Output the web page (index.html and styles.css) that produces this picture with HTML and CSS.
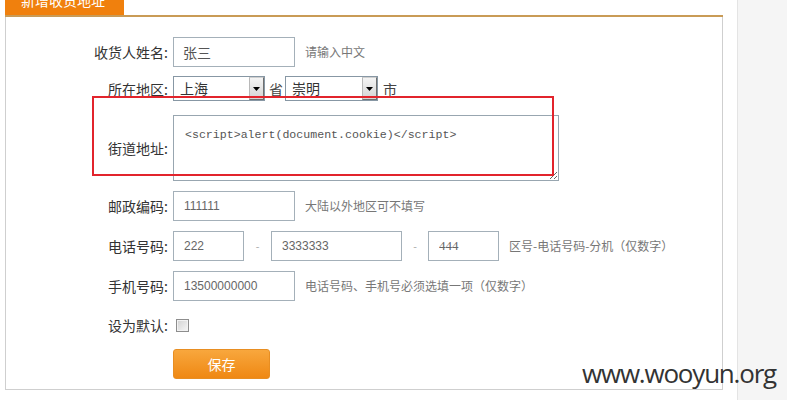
FILE: index.html
```html
<!DOCTYPE html>
<html lang="zh-CN">
<head>
<meta charset="utf-8">
<title>新增收货地址</title>
<link rel="stylesheet" href="styles.css">
</head>
<body>
<div class="page">
  <div class="main">
    <div class="panel">
      <div class="panel-head">
        <div class="tab"><span class="tab-title">新增收货地址</span></div>
      </div>
      <div class="panel-body">
        <div class="row row-name">
          <label class="lbl">收货人姓名:</label>
          <input class="field field-cjk w-mid" type="text" value="张三">
          <span class="hint">请输入中文</span>
        </div>
        <div class="row row-region">
          <label class="lbl">所在地区:</label>
          <div class="select w-sel1"><span class="sel-text">上海</span><span class="sel-btn"><svg width="7" height="4" viewBox="0 0 7 4"><path d="M0 0H7L3.5 4Z" fill="#000"/></svg></span></div>
          <span class="unit unit-prov">省</span>
          <div class="select w-sel2"><span class="sel-text">崇明</span><span class="sel-btn"><svg width="7" height="4" viewBox="0 0 7 4"><path d="M0 0H7L3.5 4Z" fill="#000"/></svg></span></div>
          <span class="unit unit-city">市</span>
        </div>
        <div class="row row-street">
          <label class="lbl">街道地址:</label>
          <textarea class="area">&lt;script&gt;alert(document.cookie)&lt;/script&gt;</textarea>
        </div>
        <div class="row">
          <label class="lbl">邮政编码:</label>
          <input class="field w-mid" type="text" value="111111">
          <span class="hint">大陆以外地区可不填写</span>
        </div>
        <div class="row">
          <label class="lbl">电话号码:</label>
          <input class="field w-short" type="text" value="222">
          <span class="dash dash-1">-</span>
          <input class="field w-long" type="text" value="3333333">
          <span class="dash dash-2">-</span>
          <input class="field field-serif w-short" type="text" value="444">
          <span class="hint">区号-电话号码-分机（仅数字）</span>
        </div>
        <div class="row">
          <label class="lbl">手机号码:</label>
          <input class="field w-mid" type="text" value="13500000000">
          <span class="hint">电话号码、手机号必须选填一项（仅数字）</span>
        </div>
        <div class="row row-check">
          <label class="lbl">设为默认:</label>
          <input class="check" type="checkbox">
        </div>
        <div class="row row-btn">
          <span class="lbl"></span>
          <button class="btn-save" type="button">保存</button>
        </div>
      </div>
    </div>
  </div>
  <aside class="sidebar"></aside>
</div>
<div class="annot"></div>
<div class="watermark">www.wooyun.org</div>
</body>
</html>
```

FILE: styles.css
```css
html, body {
  margin: 0;
  padding: 0;
  background: #fff;
}
body {
  font-family: "Noto Sans CJK SC", "Noto Sans", sans-serif;
  color: #333;
  width: 787px;
  height: 400px;
  overflow: hidden;
  position: relative;
}
.page {
  display: flex;
  height: 400px;
}
.main {
  width: 737px;
  flex: none;
  padding-left: 5px;
  box-sizing: border-box;
}
.sidebar {
  flex: 1;
  background: #f5f5f5;
  border-left: 1px solid #e4e4e4;
}
.panel {
  width: 718px;
}
.panel-head {
  height: 15px;
  border-bottom: 2px solid #c99b56;
  display: flex;
}
.tab {
  width: 119px;
  height: 15px;
  background: #f0800d;
  overflow: hidden;
}
.tab-title {
  display: block;
  margin-top: -8px;
  padding-left: 16px;
  font-size: 14px;
  line-height: 16px;
  color: #fff;
  white-space: nowrap;
}
.panel-body {
  border: 1px solid #cfcfcf;
  border-top: none;
  padding: 20px 0 10px 0;
  display: flex;
  flex-direction: column;
  gap: 10px;
}
.row {
  display: flex;
  align-items: center;
}
.row-region {
  margin-top: -1px;
  height: 25px;
}
.row-street {
  margin-top: 4px;
}
.row-check {
  height: 28px;
}
.lbl {
  width: 162px;
  margin-right: 5px;
  flex: none;
  text-align: right;
  font-size: 14px;
  line-height: 20px;
  color: #333;
}
.field {
  box-sizing: border-box;
  height: 30px;
  margin: 0;
  border: 1px solid #a4b0b9;
  padding: 0 0 0 10px;
  font-family: "Liberation Sans", Arial, sans-serif;
  font-size: 12px;
  color: #666;
  background: #fff;
  outline: none;
}
.field-cjk {
  font-family: "Noto Sans CJK SC", sans-serif;
  font-size: 14px;
  padding-left: 9px;
  color: #555;
}
.field-serif {
  font-family: "Liberation Serif", serif;
  font-size: 13px;
}
.w-mid { width: 122px; }
.w-short { width: 71px; }
.w-long { width: 131px; }
.hint {
  margin-left: 10px;
  font-size: 12px;
  line-height: 16px;
  color: #777;
  white-space: nowrap;
}
.dash {
  text-align: center;
  font-family: "Liberation Sans", Arial, sans-serif;
  font-size: 11px;
  color: #b0b0b0;
}
.dash-1 { width: 27px; }
.dash-2 { width: 26px; }
.select {
  box-sizing: border-box;
  height: 25px;
  border: 1px solid #8797a4;
  display: flex;
  align-items: stretch;
  background: #fff;
  align-self: flex-start;
}
.w-sel1 { width: 92px; }
.w-sel2 { width: 93px; }
.sel-text {
  flex: 1;
  padding-left: 6px;
  font-size: 14px;
  line-height: 23px;
  color: #333;
}
.sel-btn {
  width: 15px;
  box-sizing: border-box;
  border: 1px solid #6f6f6f;
  border-top-color: #d0d0d0;
  border-left-color: #b8b8b8;
  background: linear-gradient(#f4f4f4, #d4d4d4);
  display: flex;
  align-items: center;
  justify-content: center;
}
.unit {
  font-size: 14px;
  line-height: 20px;
  color: #444;
}
.unit-prov { margin: 0 2px 0 4px; }
.unit-city { margin-left: 5px; }
.area {
  box-sizing: border-box;
  width: 386px;
  height: 66px;
  margin: 0;
  border: 1px solid #98a6b0;
  padding: 12px 11px;
  font-family: "Liberation Mono", "Courier New", monospace;
  font-size: 11.6px;
  line-height: 14px;
  color: #555;
  outline: none;
  background: #fff;
}
.check {
  -webkit-appearance: none;
  appearance: none;
  box-sizing: border-box;
  width: 13px;
  height: 13px;
  margin: 0 0 0 3px;
  border: 1px solid #8d8d8d;
  background: linear-gradient(135deg, #d2d2d2, #f6f6f6);
  box-shadow: inset 0 0 0 1px #f2f2f2;
}
.btn-save {
  box-sizing: border-box;
  width: 97px;
  height: 30px;
  margin: 0;
  border: 1px solid #e88e22;
  border-radius: 3px;
  background: linear-gradient(#f8a73d, #ef8813);
  color: #fff;
  font-family: "Noto Sans CJK SC", sans-serif;
  font-size: 14px;
  line-height: 20px;
  padding: 0;
}
.annot {
  position: absolute;
  left: 92px;
  top: 96px;
  width: 462px;
  height: 80px;
  box-sizing: border-box;
  border: 2px solid #e2242c;
  pointer-events: none;
}
.watermark {
  position: absolute;
  left: 582px;
  top: 360px;
  font-family: "Open Sans", "DejaVu Sans", sans-serif;
  font-size: 26px;
  line-height: 26px;
  letter-spacing: -1.2px;
  color: #333;
  white-space: nowrap;
}
```
